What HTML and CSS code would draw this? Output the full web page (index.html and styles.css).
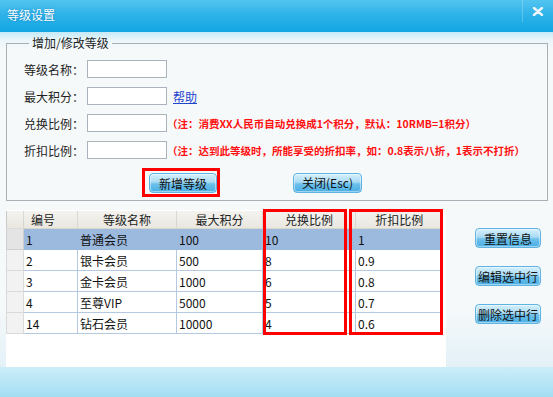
FILE: index.html
```html
<!DOCTYPE html>
<html lang="zh-CN">
<head>
  <meta charset="UTF-8" />
  <title>等级设置</title>
  <link rel="stylesheet" href="styles.css">
</head>
<body>
  <div class="window">
    <div class="titlebar">
      <span class="title">等级设置</span>
      <span class="close-box">
        <svg width="12" height="9" viewBox="0 0 12 9">
          <path d="M2 1 L10 8 M10 1 L2 8" stroke="#eef6fa" stroke-width="2.4" stroke-linecap="round" />
        </svg>
      </span>
    </div>

    <div class="main">
      <fieldset class="group">
        <legend>增加/修改等级</legend>
        <div class="form-row">
          <label>等级名称：</label>
          <input class="field" type="text" />
        </div>
        <div class="form-row">
          <label>最大积分：</label>
          <input class="field" type="text" />
          <a class="help">帮助</a>
        </div>
        <div class="form-row">
          <label>兑换比例：</label>
          <input class="field" type="text" />
          <span class="note">（注：消费XX人民币自动兑换成1个积分，默认：10RMB=1积分）</span>
        </div>
        <div class="form-row">
          <label>折扣比例：</label>
          <input class="field" type="text" />
          <span class="note">（注：达到此等级时，所能享受的折扣率，如：0.8表示八折，1表示不打折）</span>
        </div>
        <div class="form-actions">
          <span class="mark">
            <button class="btn">新增等级</button>
          </span>
          <button class="btn btn-close">关闭(Esc)</button>
        </div>
      </fieldset>

      <div class="lower">
        <div class="grid-wrap">
          <table class="grid">
            <colgroup>
              <col style="width:17px">
              <col style="width:54px">
              <col style="width:99px">
              <col style="width:86px">
              <col style="width:93px">
              <col style="width:87px">
            </colgroup>
            <thead>
              <tr>
                <th class="sel"></th>
                <th class="first">编号</th>
                <th>等级名称</th>
                <th>最大积分</th>
                <th>兑换比例</th>
                <th>折扣比例</th>
              </tr>
            </thead>
            <tbody>
              <tr class="active">
                <td class="sel"></td><td>1</td><td>普通会员</td><td>100</td><td>10</td><td>1</td>
              </tr>
              <tr>
                <td class="sel"></td><td>2</td><td>银卡会员</td><td>500</td><td>8</td><td>0.9</td>
              </tr>
              <tr>
                <td class="sel"></td><td>3</td><td>金卡会员</td><td>1000</td><td>6</td><td>0.8</td>
              </tr>
              <tr>
                <td class="sel"></td><td>4</td><td>至尊VIP</td><td>5000</td><td>5</td><td>0.7</td>
              </tr>
              <tr>
                <td class="sel"></td><td>14</td><td>钻石会员</td><td>10000</td><td>4</td><td>0.6</td>
              </tr>
            </tbody>
          </table>
          <div class="col-mark col-rate"></div>
          <div class="col-mark col-discount"></div>
        </div>

        <div class="side">
          <button class="btn">重置信息</button>
          <button class="btn">编辑选中行</button>
          <button class="btn">删除选中行</button>
        </div>
      </div>
    </div>

    <div class="footer"></div>
  </div>
</body>
</html>
```

FILE: styles.css
```css
* {
  margin: 0;
  padding: 0;
  box-sizing: border-box;
  font-family: "Noto Sans CJK SC", "Liberation Sans", sans-serif;
}

body {
  background-color: #f6f9fa;
}

.window {
  width: 553px;
  height: 397px;
  display: flex;
  flex-direction: column;
  overflow: hidden;
}

.titlebar {
  height: 32px;
  display: flex;
  justify-content: space-between;
  align-items: flex-start;
  background: linear-gradient(#52c4ef, #2fb3e9 45%, #12a5e3);
  padding-left: 7px;
}

.title {
  color: #ffffff;
  font-size: 12px;
  line-height: 30px;
  text-shadow: 0 0 2px rgba(0, 80, 140, 0.5);
}

.close-box {
  width: 31px;
  height: 22px;
  display: flex;
  align-items: center;
  justify-content: center;
  border-left: 1px solid rgba(255, 255, 255, 0.22);
}

.main {
  flex: 1;
  display: flex;
  flex-direction: column;
  padding: 0 5px 0 6px;
  background: linear-gradient(#c4eaf8 0, #eaf6fa 8px, #f6f9fa 18px, #f6f9fa 82%, #e3f1f7 100%);
}

/* group box */
.group {
  margin-top: 4px;
  height: 165px;
  border: 1px solid #a9afb4;
  padding: 10px 0 0 17px;
}

.group legend {
  font-size: 12px;
  line-height: 14px;
  color: #1e1e1e;
  padding: 0 3px;
  margin-left: 5px;
}

.form-row {
  display: flex;
  align-items: center;
  height: 18px;
  margin-bottom: 9px;
}

.form-row label {
  width: 63px;
  font-size: 12px;
  color: #1e1e1e;
}

.field {
  width: 80px;
  height: 18px;
  border: 1px solid #aab3bc;
  background-color: #ffffff;
  outline: none;
}

.help {
  margin-left: 6px;
  font-size: 12px;
  color: #1f44cc;
  text-decoration: underline;
}

.note {
  margin-left: 0;
  font-size: 10.5px;
  font-weight: bold;
  color: #ff1010;
  white-space: nowrap;
}

.form-actions {
  display: flex;
  align-items: center;
  padding-left: 118px;
}

.mark {
  display: flex;
  border: 3px solid #ff0000;
  padding: 2px 0 1px 4px;
}

.btn {
  height: 20px;
  width: 68px;
  padding: 0;
  border: 1px solid #5fb3e2;
  border-radius: 4px;
  background: linear-gradient(#d6f0fb, #a9dbf4 45%, #6ec0ea 55%, #4aaee4);
  box-shadow: inset 0 0 0 1px rgba(255, 255, 255, 0.45);
  font-size: 12px;
  color: #111111;
  cursor: pointer;
}

.btn-close {
  margin-left: 73px;
  width: 69px;
}

/* lower area */
.lower {
  flex: 1;
  display: flex;
  margin-top: 9px;
}

.grid-wrap {
  position: relative;
  width: 440px;
  background-color: #ffffff;
  padding-top: 1px;
}

.grid {
  width: 436px;
  table-layout: fixed;
  border-collapse: collapse;
  font-size: 12px;
}

.grid th {
  height: 17px;
  font-weight: normal;
  color: #222222;
  background: linear-gradient(#f3f2ee, #e9e7e0);
  border-bottom: 1px solid #d8d5cb;
  border-left: 1px solid #d9d7cf;
  padding: 0;
  text-align: center;
}

.grid th.first {
  text-align: left;
  padding-left: 7px;
}

.grid td {
  height: 21px;
  padding: 0 2px;
  border: 1px solid #b4c8e2;
  color: #111111;
  white-space: nowrap;
}

.grid .sel {
  background-color: #f2f2f2;
  border-color: #dadada;
}

.grid th.sel {
  border-left: 1px solid #c8c8c8;
}

.grid tr.active td {
  background-color: #9cb9de;
  border-color: #9cb9de;
}

.grid tr.active td.sel {
  background-color: #e4e4e4;
  border-color: #cfcfcf;
}

.col-mark {
  position: absolute;
  top: -1px;
  height: 126px;
  border: 3px solid #ff0000;
}

.col-rate {
  left: 257px;
  width: 84px;
}

.col-discount {
  left: 343px;
  width: 94px;
}

.side {
  display: flex;
  flex-direction: column;
  gap: 18px;
  padding: 18px 0 0 29px;
}

.side .btn {
  width: 66px;
}

.footer {
  height: 30px;
  background: linear-gradient(#cdeef9, #a4ddf4);
}
```
